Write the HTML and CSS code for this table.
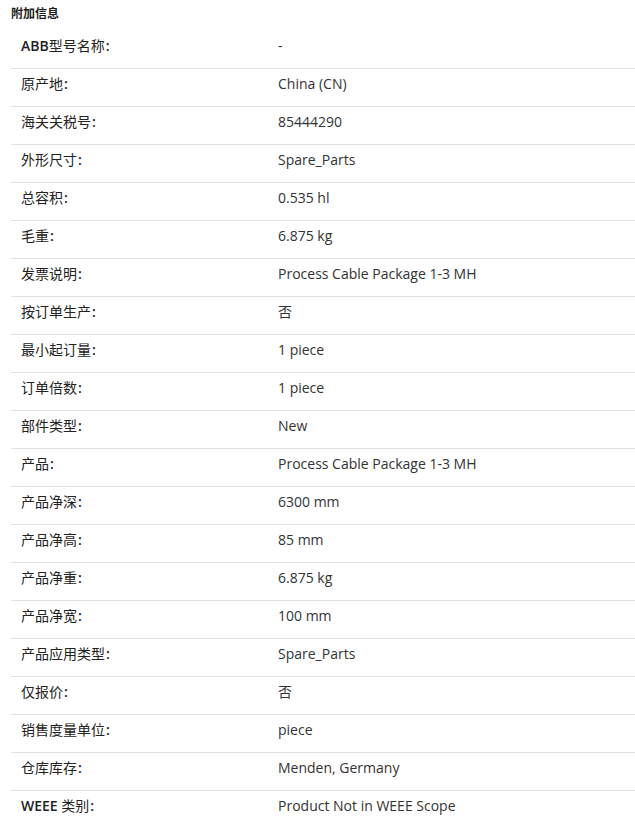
FILE: index.html
```html
<!DOCTYPE html>
<html lang="zh">
<head>
  <meta charset="UTF-8">
  <title>附加信息</title>
  <link rel="stylesheet" href="styles.css">
</head>
<body>
  <div class="info">
    <h2>附加信息</h2>
    <table>
      <tbody>
        <tr><th><b>ABB</b>型号名称</th><td>-</td></tr>
        <tr><th>原产地</th><td>China (CN)</td></tr>
        <tr><th>海关关税号</th><td>85444290</td></tr>
        <tr><th>外形尺寸</th><td>Spare_Parts</td></tr>
        <tr><th>总容积</th><td>0.535 hl</td></tr>
        <tr><th>毛重</th><td>6.875 kg</td></tr>
        <tr><th>发票说明</th><td>Process Cable Package 1-3 MH</td></tr>
        <tr><th>按订单生产</th><td>否</td></tr>
        <tr><th>最小起订量</th><td>1 piece</td></tr>
        <tr><th>订单倍数</th><td>1 piece</td></tr>
        <tr><th>部件类型</th><td>New</td></tr>
        <tr><th>产品</th><td>Process Cable Package 1-3 MH</td></tr>
        <tr><th>产品净深</th><td>6300 mm</td></tr>
        <tr><th>产品净高</th><td>85 mm</td></tr>
        <tr><th>产品净重</th><td>6.875 kg</td></tr>
        <tr><th>产品净宽</th><td>100 mm</td></tr>
        <tr><th>产品应用类型</th><td>Spare_Parts</td></tr>
        <tr><th>仅报价</th><td>否</td></tr>
        <tr><th>销售度量单位</th><td>piece</td></tr>
        <tr><th>仓库库存</th><td>Menden, Germany</td></tr>
        <tr><th><b>WEEE</b> 类别</th><td>Product Not in WEEE Scope</td></tr>
      </tbody>
    </table>
  </div>
</body>
</html>
```

FILE: styles.css
```css
* {
  box-sizing: border-box;
  font-family: 'Open Sans', 'Noto Sans CJK SC', sans-serif;
}

body {
  margin: 0;
  background: #fff;
  color: #262626;
}

.info {
  padding: 0 0 0 11px;
}

.info h2 {
  margin: 0;
  height: 30px;
  padding-top: 5px;
  font-size: 12px;
  font-weight: bold;
  line-height: 17px;
  color: #1a1a1a;
}

table {
  width: 624px;
  border-collapse: collapse;
  table-layout: fixed;
}

th, td {
  height: 38px;
  padding: 0 10px 6px;
  text-align: left;
  font-size: 14px;
  line-height: 18px;
  vertical-align: middle;
  border-bottom: 1px solid #e0e0e5;
}

th {
  width: 257px;
  font-weight: normal;
  color: #222;
}

th b, th::after {
  font-weight: 600;
}

th::after {
  content: ":";
  padding-left: 1px;
}

td {
  color: #333;
}

tr:last-child th, tr:last-child td {
  border-bottom: none;
}
```
